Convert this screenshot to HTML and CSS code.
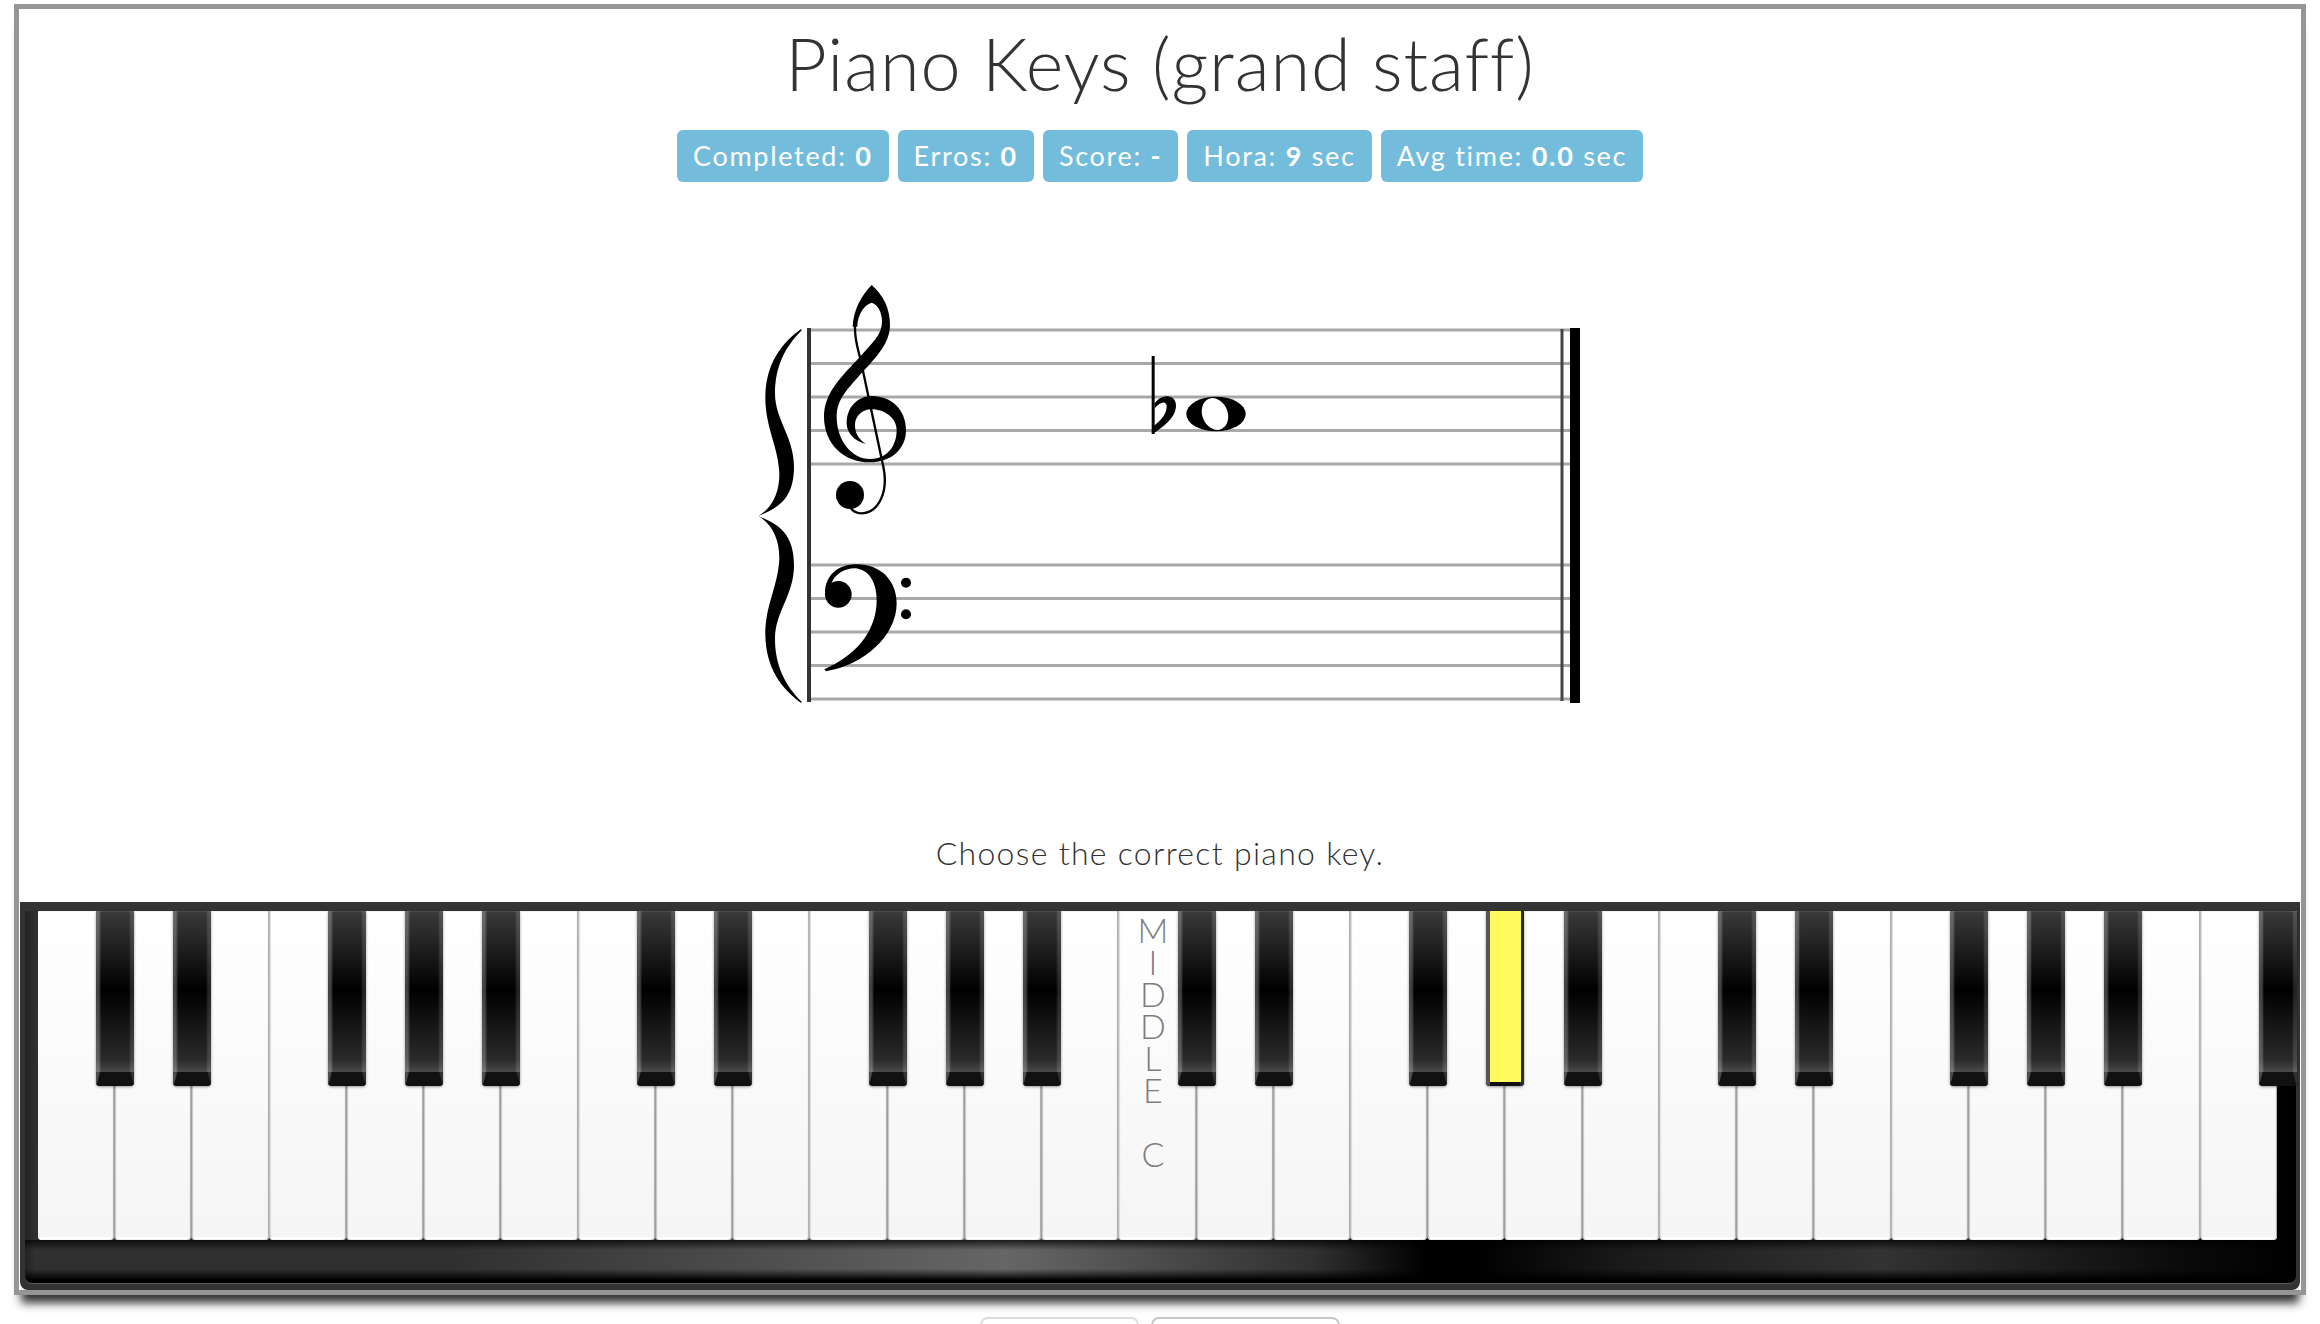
FILE: index.html
```html
<!DOCTYPE html>
<html lang="en">
  <head>
    <meta charset="UTF-8" />
    <title>Piano Keys (grand staff)</title>
    <link rel="stylesheet" href="styles.css">
  </head>
  <body>
    <div class="frame">
      <h1>Piano Keys (grand staff)</h1>

      <div class="stats">
        <span class="stat">Completed: <b>0</b></span>
        <span class="stat">Erros: <b>0</b></span>
        <span class="stat">Score: <b>-</b></span>
        <span class="stat">Hora: <b>9</b> sec</span>
        <span class="stat">Avg time: <b>0.0</b> sec</span>
      </div>

      <!-- grand staff, viewBox is in page coordinates -->
      <svg class="staff" viewBox="720 270 880 450" width="880" height="450">
        <g class="lines">
          <line x1="809" y1="330" x2="1570" y2="330" />
          <line x1="809" y1="363.5" x2="1570" y2="363.5" />
          <line x1="809" y1="397" x2="1570" y2="397" />
          <line x1="809" y1="430.5" x2="1570" y2="430.5" />
          <line x1="809" y1="464" x2="1570" y2="464" />
          <line x1="809" y1="565" x2="1570" y2="565" />
          <line x1="809" y1="598.5" x2="1570" y2="598.5" />
          <line x1="809" y1="632" x2="1570" y2="632" />
          <line x1="809" y1="665.5" x2="1570" y2="665.5" />
          <line x1="809" y1="699" x2="1570" y2="699" />
        </g>
        <rect x="807" y="328" width="4" height="374" fill="#333" />
        <rect x="1560.5" y="329" width="3" height="372" fill="#444" />
        <rect x="1570" y="328" width="10" height="375" fill="#000" />

        <g transform="translate(740 260) scale(.33333)">
          <!-- brace -->
          <path id="brace" d="M182 208C125 250 78 310 76 410C75 500 115 560 118 640C119 700 95 745 55 768C110 745 162 720 162 620C162 530 105 480 105 400C105 320 135 260 186 210Z" />
          <use href="#brace" transform="matrix(1 0 0 -1 0 1536)" />

          <!-- treble clef -->
          <path d="M378 552C345 545 320 520 320 490C320 440 355 408 395 408C455 408 498 450 498 510C498 570 450 607 390 607C310 607 252 550 252 470C252 395 310 345 360 290C395 250 426 225 426 185C427 160 414 133 395 128C372 135 352 165 352 200L338 200C340 150 365 105 395 75C430 105 450 145 450 195C450 255 400 300 355 350C320 390 290 420 290 470C290 540 335 597 390 597C440 597 470 560 470 510C470 475 435 448 395 448C365 448 345 470 345 495C345 525 360 540 378 552Z" />
          <path class="clef-stem" d="M345 195C343 240 355 270 362 300L430 620C445 690 420 757 365 760C345 760 335 750 330 740" />
          <circle cx="330" cy="705" r="42" />

          <!-- bass clef -->
          <path d="M255 1000C255 945 295 913 350 913C425 913 470 965 470 1030C470 1130 370 1215 258 1234L253 1228C340 1190 410 1120 410 1020C410 965 385 928 345 925C310 925 285 945 275 968Z" />
          <circle cx="295" cy="1003" r="40" />
          <circle cx="498" cy="968" r="15" />
          <circle cx="498" cy="1063" r="15" />

          <!-- a flat, whole note -->
          <rect x="1235" y="288" width="9" height="234" />
          <path d="M1244 430C1265 400 1310 400 1308 440C1305 475 1270 500 1238 522L1238 500C1265 480 1280 460 1280 440C1280 420 1260 425 1244 445Z" />
          <ellipse cx="1428" cy="462" rx="89" ry="52" />
          <ellipse cx="1425" cy="462" rx="38" ry="49" transform="rotate(-22 1425 462)" fill="#fff" />
        </g>
      </svg>

      <p class="prompt">Choose the correct piano key.</p>

      <div class="piano">
        <div class="deck">
          <div class="keys">
            <div class="white"><i class="black"></i></div>
            <div class="white"><i class="black"></i></div>
            <div class="white"></div>
            <div class="white nat"><i class="black"></i></div>
            <div class="white"><i class="black"></i></div>
            <div class="white"><i class="black"></i></div>
            <div class="white"></div>
            <div class="white nat"><i class="black"></i></div>
            <div class="white"><i class="black"></i></div>
            <div class="white"></div>
            <div class="white nat"><i class="black"></i></div>
            <div class="white"><i class="black"></i></div>
            <div class="white"><i class="black"></i></div>
            <div class="white"></div>
            <div class="white nat">
              <div class="middle">M<br>I<br>D<br>D<br>L<br>E<br><br>C</div>
              <i class="black"></i>
            </div>
            <div class="white"><i class="black"></i></div>
            <div class="white"></div>
            <div class="white nat"><i class="black"></i></div>
            <div class="white"><i class="black active"></i></div>
            <div class="white"><i class="black"></i></div>
            <div class="white"></div>
            <div class="white nat"><i class="black"></i></div>
            <div class="white"><i class="black"></i></div>
            <div class="white"></div>
            <div class="white nat"><i class="black"></i></div>
            <div class="white"><i class="black"></i></div>
            <div class="white"><i class="black"></i></div>
            <div class="white"></div>
            <div class="white nat"><i class="black"></i></div>
          </div>
        </div>
      </div>
    </div>

    <div class="buttons">
      <button class="btn btn-one"></button>
      <button class="btn btn-two"></button>
    </div>
  </body>
</html>
```

FILE: styles.css
```css
html,
body {
  height: 1324px;
  overflow: hidden;
}
body {
  margin: 0;
  padding: 4px 14px 0;
  box-sizing: border-box;
  background: #fff;
  font-family: "Lato", "Liberation Sans", sans-serif;
  font-weight: 300;
  color: #333;
}
.frame {
  height: 1291px;
  box-sizing: border-box;
  border: 5px solid #959595;
  box-shadow: 0 15px 9px -7px rgba(0, 0, 0, 0.8);
  display: flex;
  flex-direction: column;
  align-items: center;
}
h1 {
  margin: 12px 0 0;
  font-size: 72px;
  line-height: 84px;
  font-weight: 300;
  letter-spacing: 0.9px;
}
.stats {
  margin-top: 25px;
  display: flex;
  gap: 9px;
}
.stat {
  height: 52px;
  line-height: 52px;
  padding: 0 16px;
  background-color: #74bcdc;
  border-radius: 6px;
  color: #fff;
  font-size: 27px;
  font-weight: 400;
  letter-spacing: 1.7px;
}
.stat b {
  font-weight: 700;
}
.staff {
  display: block;
  margin-top: 88px;
  flex-shrink: 0;
}
.lines line {
  stroke: #a8a8a8;
  stroke-width: 3;
}
.clef-stem {
  fill: none;
  stroke: #000;
  stroke-width: 7;
}
.prompt {
  margin: 113px 0 0;
  font-size: 32px;
  line-height: 40px;
  letter-spacing: 1.3px;
}
.piano {
  align-self: stretch;
  flex: 1;
  margin: 29px 1px 0;
  box-sizing: border-box;
  padding: 9px 4px 7px 5px;
  display: flex;
  border-radius: 0 0 8px 8px;
  background-color: #333;
}
.deck {
  flex: 1;
  box-sizing: border-box;
  padding: 0 19px 0 13px;
  border-radius: 0 0 7px 7px;
  background:
    linear-gradient(#0000 329px, #000b 329px, #0000 339px, #0000 358px, #000 369px),
    linear-gradient(to right, #222 0, #303030 10px, #303030 430px, #666 981px, #303030 1290px, #000 1400px, #000 1450px, #1a1a1a 1600px, #333 1855px, #0a0a0a 2160px, #000 2271px);
  box-shadow: 0 1px 0 #5a5a5a;
}
.keys {
  display: flex;
  height: 329px;
}
.white {
  flex: 1;
  position: relative;
  box-sizing: border-box;
  border-left: 1px solid #a0a0a0;
  border-radius: 0 0 4px 4px;
  background: linear-gradient(#fff, #f5f5f5);
  box-shadow: inset 1px 0 1px #c4c4c4, inset -1px 0 1px #aaa, inset 0 -3px 1px #fff;
}
.white:first-child {
  border-left: 0;
  box-shadow: inset -1px 0 1px #aaa, inset 0 -3px 1px #fff;
}
.white.nat {
  border-left-color: #bcbcbc;
  box-shadow: inset 1px 0 1px #ddd, inset -1px 0 1px #aaa, inset 0 -3px 1px #fff;
}
.black {
  position: absolute;
  z-index: 2;
  top: 0;
  right: -20px;
  width: 38px;
  height: 175px;
  overflow: hidden;
  border-radius: 0 0 4px 4px;
  background-color: #111;
  box-shadow: 0 1px 3px rgba(0, 0, 0, 0.4);
}
.black::before {
  content: "";
  position: absolute;
  top: 0;
  left: 0;
  right: 0;
  bottom: 0;
  background: linear-gradient(#3a3a3a 0, #000 45%, #2a2a2a 85%, #4a4a4a 92%, #111 92%);
  box-shadow: inset 4px 0 2px rgba(255, 255, 255, 0.26), inset -4px 0 2px rgba(255, 255, 255, 0.14);
}
.black::after {
  content: "";
  position: absolute;
  left: 0;
  right: 0;
  bottom: 0;
  height: 14px;
  background-color: #111;
  clip-path: polygon(4px 0, calc(100% - 4px) 0, 100% 100%, 0 100%);
}
.black.active::before {
  background: #111;
  box-shadow: inset 4px 0 0 #555, inset -4px 0 0 #2a2a2a;
}
.black.active::after {
  top: 0;
  left: 4px;
  right: 3px;
  bottom: 4px;
  height: auto;
  background-color: #fffb5f;
  clip-path: none;
}
.middle {
  padding: 3px 9px 0 0;
  text-align: center;
  font-size: 34px;
  line-height: 32px;
  color: #7d7d7d;
}
.buttons {
  display: flex;
  justify-content: center;
  gap: 12px;
  margin: 22px 0 0 -1px;
}
.btn {
  height: 40px;
  padding: 0;
  background: #fff;
  border: 2px solid #dcdcdc;
  border-radius: 8px;
}
.btn-one {
  width: 159px;
}
.btn-two {
  width: 189px;
  border-color: #c6c6c6;
}
```
